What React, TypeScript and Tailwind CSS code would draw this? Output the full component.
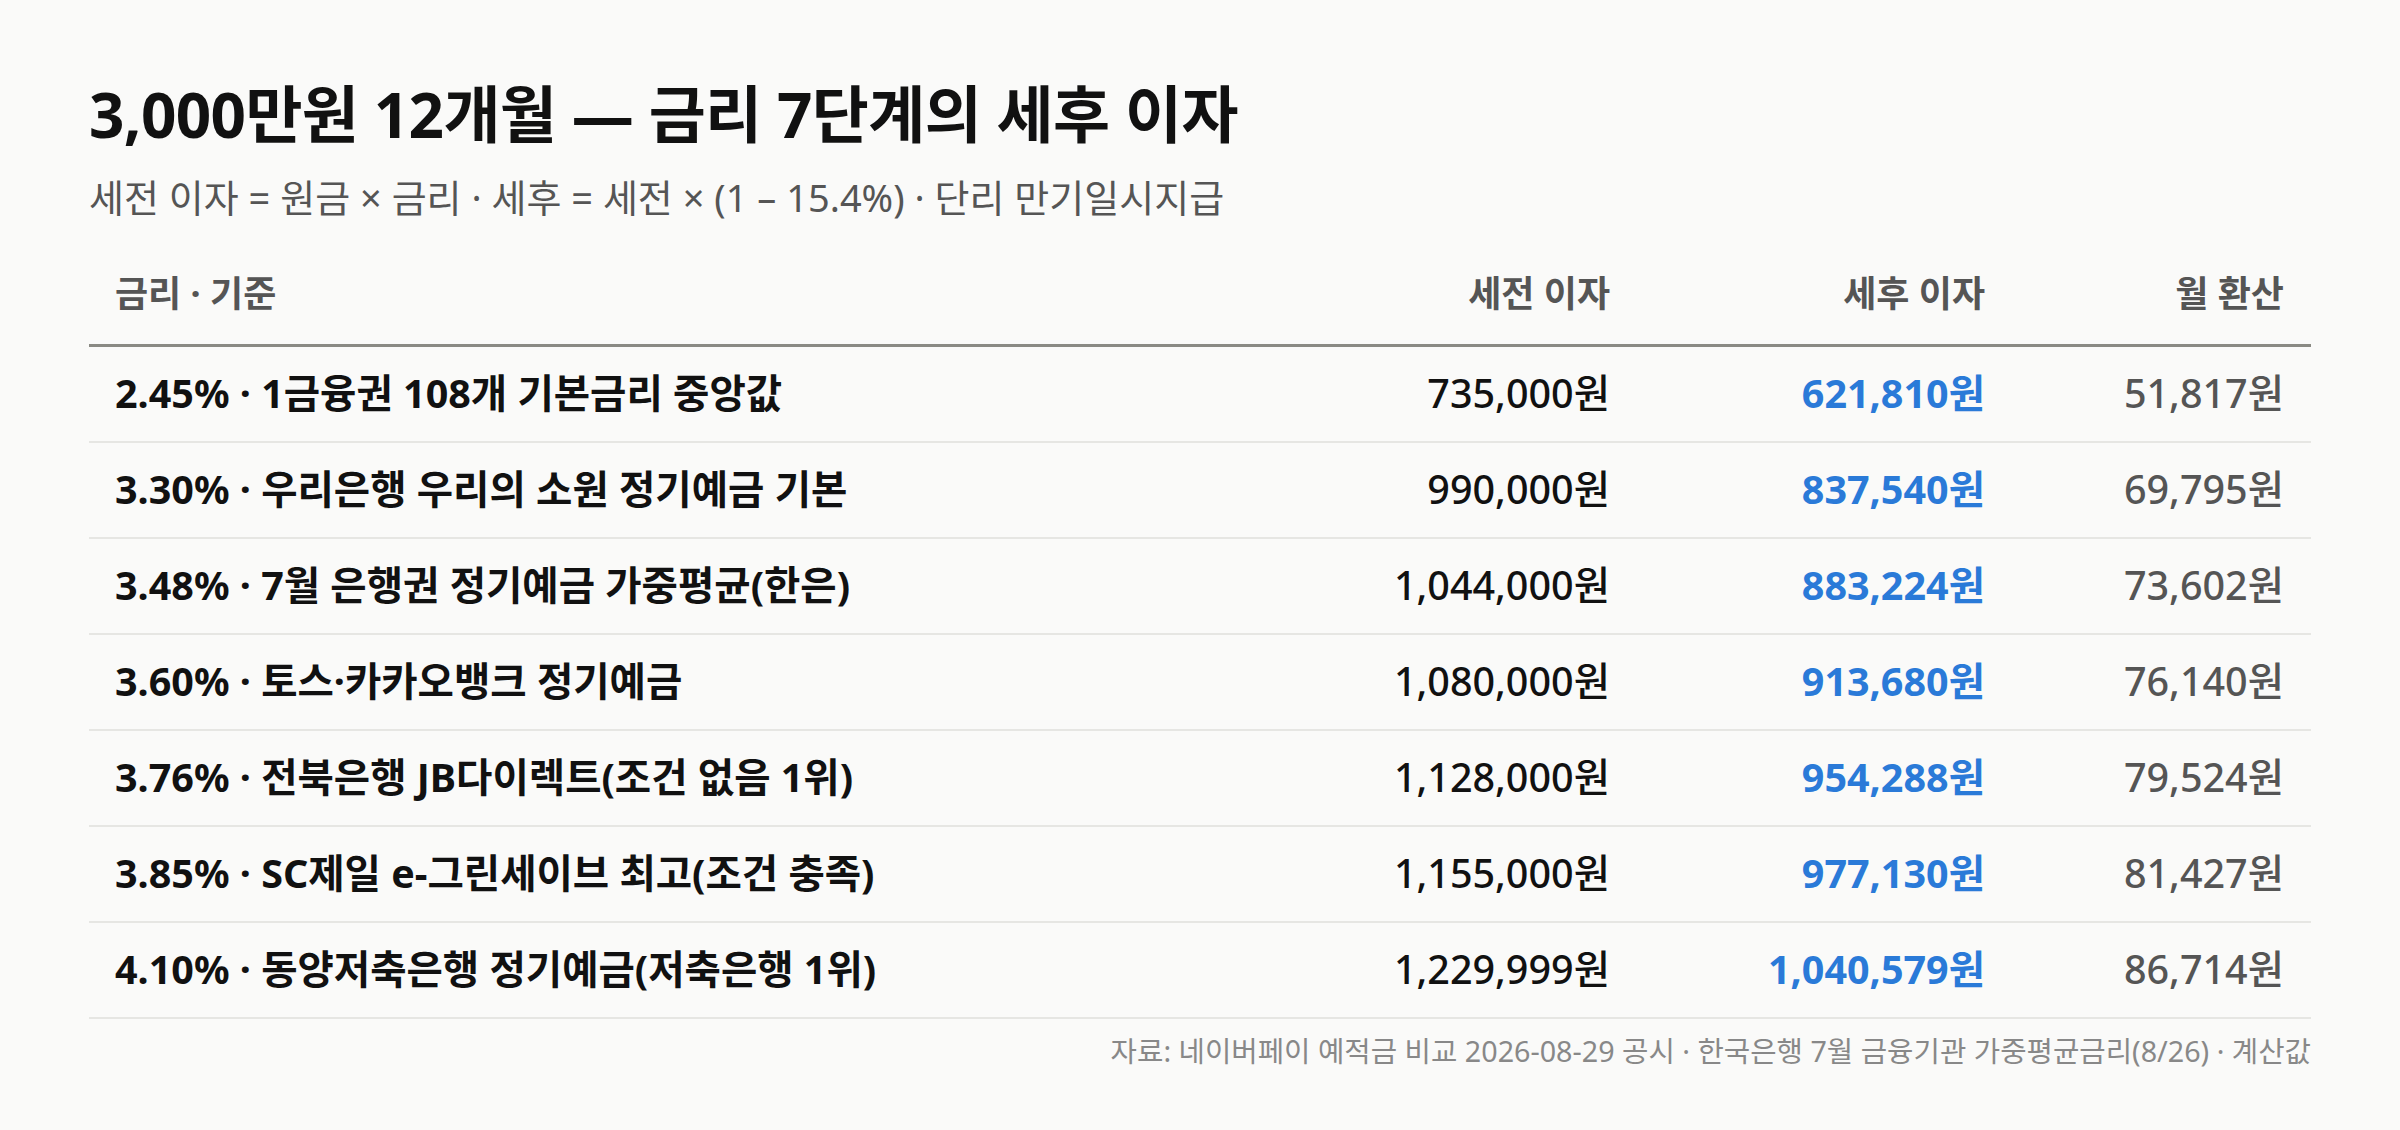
import * as React from "react";

type Row = {
  label: string;
  gross: string;
  net: string;
  monthly: string;
};

const rows: Row[] = [
  { label: "2.45% · 1금융권 108개 기본금리 중앙값", gross: "735,000원", net: "621,810원", monthly: "51,817원" },
  { label: "3.30% · 우리은행 우리의 소원 정기예금 기본", gross: "990,000원", net: "837,540원", monthly: "69,795원" },
  { label: "3.48% · 7월 은행권 정기예금 가중평균(한은)", gross: "1,044,000원", net: "883,224원", monthly: "73,602원" },
  { label: "3.60% · 토스·카카오뱅크 정기예금", gross: "1,080,000원", net: "913,680원", monthly: "76,140원" },
  { label: "3.76% · 전북은행 JB다이렉트(조건 없음 1위)", gross: "1,128,000원", net: "954,288원", monthly: "79,524원" },
  { label: "3.85% · SC제일 e-그린세이브 최고(조건 충족)", gross: "1,155,000원", net: "977,130원", monthly: "81,427원" },
  { label: "4.10% · 동양저축은행 정기예금(저축은행 1위)", gross: "1,229,999원", net: "1,040,579원", monthly: "86,714원" },
];

const grid = "grid grid-cols-[1fr_375px_375px_299px] items-center";

export default function App() {
  return (
    <main
      className="min-h-screen bg-[#fafaf9] px-[89px] pt-[77px] text-[#111]"
      style={{ fontFamily: '"Noto Sans", "Noto Sans CJK KR", sans-serif' }}
    >
      <h1 className="text-[62px] font-bold leading-[1.2] tracking-[-0.01em]">
        3,000만원 12개월 — 금리 7단계의 세후 이자
      </h1>
      <p className="mt-[22px] text-[38px] leading-[1.3] text-[#555]">
        세전 이자 = 원금 × 금리 · 세후 = 세전 × (1 – 15.4%) · 단리 만기일시지급
      </p>

      <div className="mt-[21px]">
        {/* Header */}
        <div className={`${grid} h-[103px] border-b-[3px] border-[#8a8a84] text-[36px] font-bold text-[#555]`}>
          <div className="pl-[26px]">금리 · 기준</div>
          <div className="pr-[27px] text-right">세전 이자</div>
          <div className="pr-[27px] text-right">세후 이자</div>
          <div className="pr-[27px] text-right">월 환산</div>
        </div>

        {rows.map((r) => (
          <div
            key={r.label}
            className={`${grid} h-[96px] border-b-2 border-[#e6e6e3] text-[39.5px]`}
          >
            <div className="pl-[26px] font-bold text-[#111]">{r.label}</div>
            <div className="pr-[27px] text-right font-medium text-[#111]">{r.gross}</div>
            <div className="pr-[27px] text-right font-bold text-[#2a7ad8]">{r.net}</div>
            <div className="pr-[27px] text-right font-medium text-[#555]">{r.monthly}</div>
          </div>
        ))}
      </div>

      <p className="mt-[10px] text-right text-[28.7px] leading-[1.5] text-[#888]">
        자료: 네이버페이 예적금 비교 2026-08-29 공시 · 한국은행 7월 금융기관 가중평균금리(8/26) · 계산값
      </p>
    </main>
  );
}
